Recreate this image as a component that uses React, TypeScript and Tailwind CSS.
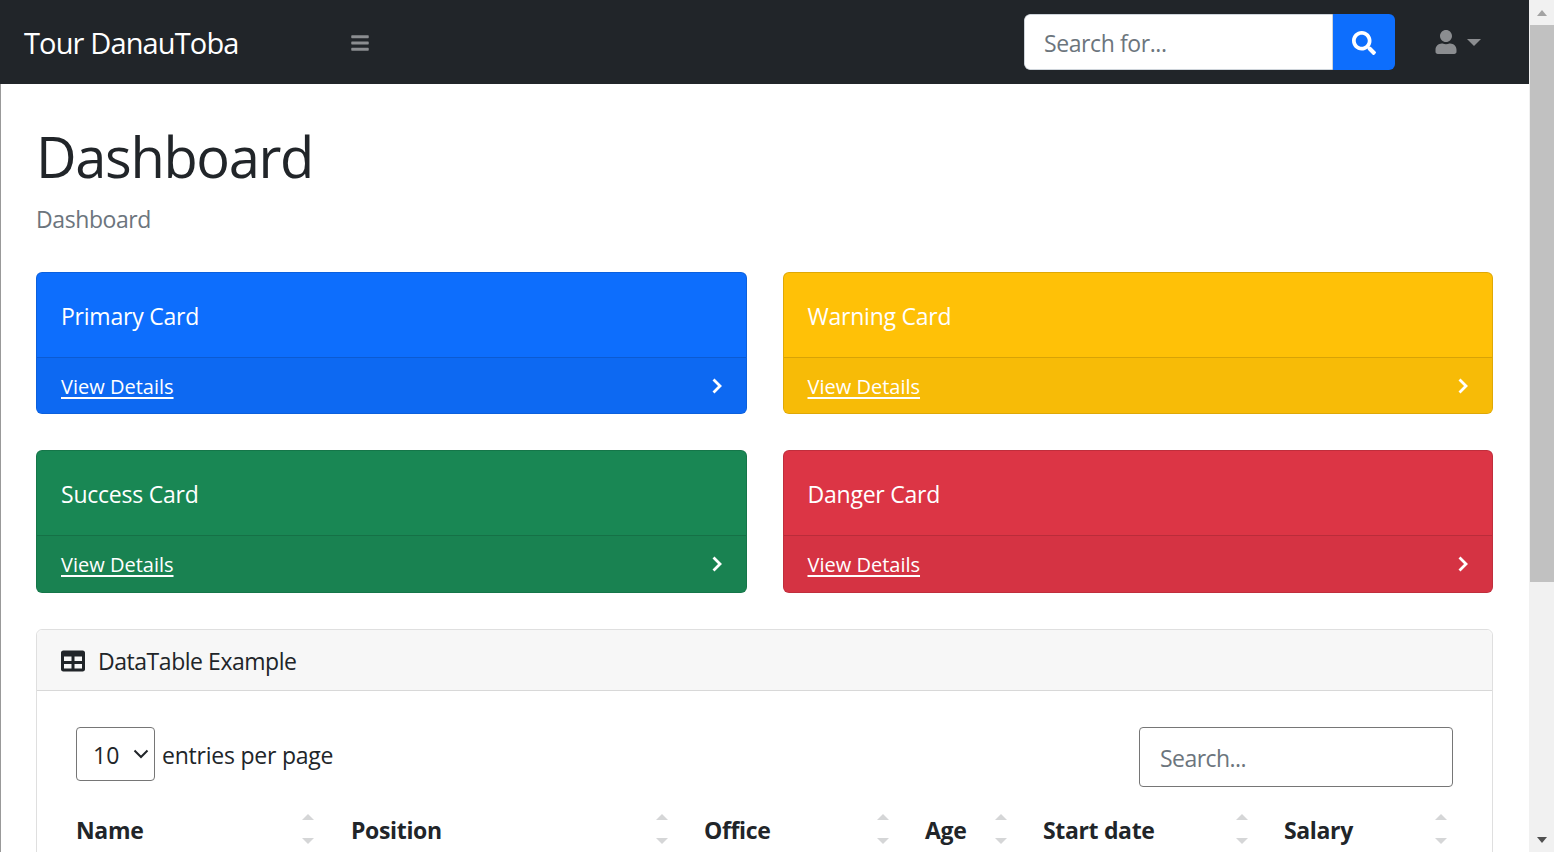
import { FaBars, FaSearch, FaTable, FaUser } from 'react-icons/fa'

const cards = [
  { title: 'Primary Card', bg: 'bg-[#0d6efd]', foot: 'bg-[#0d69f2]', h: 'h-[142px]', footH: 'h-[56px]' },
  { title: 'Warning Card', bg: 'bg-[#ffc107]', foot: 'bg-[#f7bb07]', h: 'h-[142px]', footH: 'h-[56px]' },
  { title: 'Success Card', bg: 'bg-[#198754]', foot: 'bg-[#198251]', h: 'h-[143px]', footH: 'h-[57px]' },
  { title: 'Danger Card', bg: 'bg-[#dc3545]', foot: 'bg-[#d53343]', h: 'h-[143px]', footH: 'h-[57px]' },
]

const columns = [
  { name: 'Name', width: 'w-[275px]', pad: 'pr-[37px]' },
  { name: 'Position', width: 'w-[353px]', pad: 'pr-[36px]' },
  { name: 'Office', width: 'w-[221px]', pad: 'pr-[36px]' },
  { name: 'Age', width: 'w-[118px]', pad: 'pr-[36px]' },
  { name: 'Start date', width: 'w-[241px]', pad: 'pr-[36px]' },
  { name: 'Salary', width: 'w-[169px]', pad: 'pr-[6px]' },
]

function SortArrows() {
  return (
    <div className="mt-[2px] flex h-[30px] w-[12px] flex-col justify-between">
      <div className="h-0 w-0 border-x-[6px] border-b-[6px] border-x-transparent border-b-[#d5d6d7]" />
      <div className="h-0 w-0 border-x-[6px] border-t-[6px] border-x-transparent border-t-[#d5d6d7]" />
    </div>
  )
}

function StatCard({ title, bg, foot, h, footH }: { title: string; bg: string; foot: string; h: string; footH: string }) {
  return (
    <div className={`flex flex-col overflow-hidden rounded-[6px] border border-black/[.125] text-white ${bg} ${h}`}>
      <div className="flex flex-1 items-center px-[24px] pt-[3px] text-[23px] tracking-[-0.01em]">{title}</div>
      <div className={`flex items-center justify-between border-t border-black/[.125] pl-[24px] pr-[24px] ${footH} ${foot}`}>
        <a className="pt-[2px] text-[20px] underline underline-offset-[3px]">View Details</a>
        <svg width="10" height="16" viewBox="0 0 10 16" fill="none" stroke="white" strokeWidth="2.8">
          <path d="M1.5 1.5L8 8l-6.5 6.5" />
        </svg>
      </div>
    </div>
  )
}

function Scrollbar() {
  return (
    <div className="flex h-full w-[25px] flex-col items-center bg-[#f1f1f1] pl-[1px]">
      <div className="flex h-[25px] items-center justify-center">
        <div className="h-0 w-0 border-x-[5px] border-b-[6px] border-x-transparent border-b-[#a3a3a3]" />
      </div>
      <div className="h-[557px] w-full bg-[#c1c1c1]" />
      <div className="flex-1" />
      <div className="flex h-[25px] items-center justify-center">
        <div className="h-0 w-0 border-x-[5px] border-t-[6px] border-x-transparent border-t-[#505050]" />
      </div>
    </div>
  )
}

export default function App() {
  return (
    <div className="flex h-[852px] overflow-hidden bg-white font-['Open_Sans',sans-serif] text-[#212529]">
      <div className="flex w-[1529px] flex-col">
        {/* Top navbar */}
        <nav className="flex h-[84px] shrink-0 items-center bg-[#212529]">
          <div className="ml-[24px] w-[326px] pt-[2px] text-[29px] tracking-[-0.03em] text-white">Tour DanauToba</div>
          <FaBars className="mt-[1px] text-[20px] text-[#8b8d90]" />
          <div className="ml-auto flex h-[56px] w-[371px] overflow-hidden rounded-[6px]">
            <input
              placeholder="Search for..."
              className="h-full w-[309px] rounded-l-[6px] border border-[#ced4da] bg-white px-[19px] pt-[2px] text-[23px] tracking-[-0.018em] placeholder:text-[#6c757d]"
            />
            <button className="flex flex-1 items-center justify-center bg-[#0d6efd] pt-[1px] text-white">
              <FaSearch className="text-[24px]" />
            </button>
          </div>
          <div className="ml-[39px] mr-[48px] flex items-center gap-[9px] text-[#8b8d90]">
            <FaUser className="text-[24px]" />
            <div className="h-0 w-0 border-x-[7px] border-t-[7px] border-x-transparent border-t-[#8b8d90]" />
          </div>
        </nav>

        {/* Page content */}
        <main className="flex-1 overflow-hidden border-l border-[#999999] pl-[35px] pr-[36px]">
          <h1 className="mt-[36px] h-[72px] text-[56px] font-medium leading-[72px] tracking-[-0.024em]">Dashboard</h1>
          <div className="mt-[9px] h-[36px] text-[23px] leading-[36px] tracking-[-0.018em] text-[#6c757d]">Dashboard</div>

          <div className="mt-[35px] grid grid-cols-2 gap-x-[36px] gap-y-[36px]">
            {cards.map(card => (
              <StatCard key={card.title} {...card} />
            ))}
          </div>

          {/* DataTable card */}
          <section className="mt-[36px] h-[300px] rounded-t-[6px] border border-black/[.125]">
            <div className="flex h-[61px] items-center gap-[13px] rounded-t-[6px] border-b border-black/[.125] bg-[#f7f7f7] pl-[24px] text-[23px] tracking-[-0.02em]">
              <FaTable className="mt-[1px] text-[24px]" />
              <span className="pt-[3px]">DataTable Example</span>
            </div>
            <div className="px-[39px] pt-[36px]">
              <div className="flex items-start justify-between">
                <div className="flex items-center gap-[7px]">
                  <div className="flex h-[54px] w-[79px] items-center justify-between rounded-[4px] border border-[#767676] pl-[16px] pr-[5px] text-[23px]">
                    <span className="pt-[2px]">10</span>
                    <svg width="16" height="10" viewBox="0 0 16 10" fill="none" stroke="#212529" strokeWidth="2">
                      <path d="M1.5 1.5L8 8l6.5-6.5" />
                    </svg>
                  </div>
                  <span className="pt-[3px] text-[23px] tracking-[-0.01em]">entries per page</span>
                </div>
                <input
                  placeholder="Search..."
                  className="h-[60px] w-[314px] rounded-[4px] border border-[#767676] px-[20px] pt-[2px] text-[23px] tracking-[-0.024em] placeholder:text-[#6c757d]"
                />
              </div>
              <div className="mt-[25px] flex">
                {columns.map(col => (
                  <div key={col.name} className={`flex items-start justify-between ${col.width} ${col.pad}`}>
                    <span className="mt-[1px] text-[23px] font-bold tracking-[-0.015em]">{col.name}</span>
                    <SortArrows />
                  </div>
                ))}
              </div>
            </div>
          </section>
        </main>
      </div>
      <Scrollbar />
    </div>
  )
}
